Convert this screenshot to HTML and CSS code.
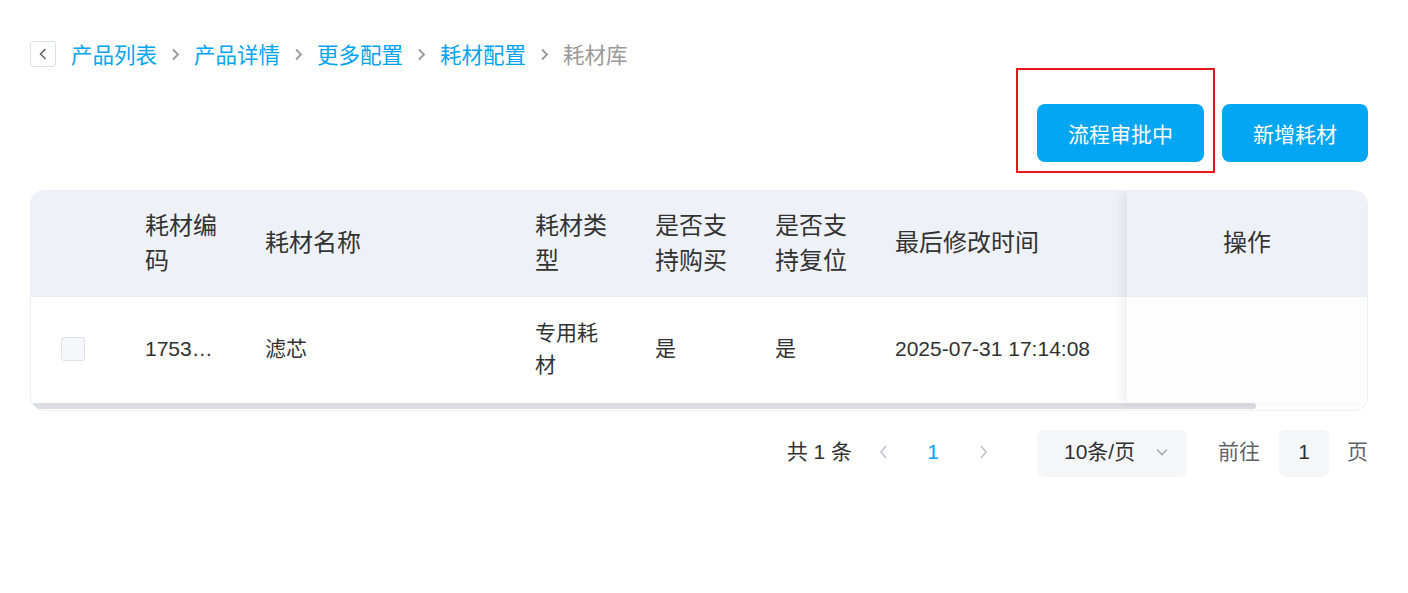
FILE: index.html
```html
<!DOCTYPE html>
<html lang="zh-CN">
<head>
    <meta charset="UTF-8">
    <meta name="viewport" content="width=device-width, initial-scale=1.0">
    <title>耗材库</title>
    <link rel="stylesheet" href="styles.css">
</head>
<body>
    <div class="page">
        <div class="crumbs">
            <span class="back">
                <svg width="8" height="12" viewBox="0 0 8 12"><path d="M6.5 1L1.5 6l5 5" fill="none" stroke="#666" stroke-width="1.6"/></svg>
            </span>
            <a class="crumb">产品列表</a>
            <svg class="sep" width="9" height="13" viewBox="0 0 9 13"><path d="M2 1.5l5 5-5 5" fill="none" stroke="#999" stroke-width="1.8"/></svg>
            <a class="crumb">产品详情</a>
            <svg class="sep" width="9" height="13" viewBox="0 0 9 13"><path d="M2 1.5l5 5-5 5" fill="none" stroke="#999" stroke-width="1.8"/></svg>
            <a class="crumb">更多配置</a>
            <svg class="sep" width="9" height="13" viewBox="0 0 9 13"><path d="M2 1.5l5 5-5 5" fill="none" stroke="#999" stroke-width="1.8"/></svg>
            <a class="crumb">耗材配置</a>
            <svg class="sep" width="9" height="13" viewBox="0 0 9 13"><path d="M2 1.5l5 5-5 5" fill="none" stroke="#999" stroke-width="1.8"/></svg>
            <span class="crumb current">耗材库</span>
        </div>

        <div class="toolbar">
            <div class="marked">
                <button class="btn">流程审批中</button>
                <span class="mark"></span>
            </div>
            <button class="btn">新增耗材</button>
        </div>

        <div class="table">
            <div class="body">
                <div class="main">
                    <div class="row head">
                        <div class="cell c-check"></div>
                        <div class="cell c-code">耗材编码</div>
                        <div class="cell c-name">耗材名称</div>
                        <div class="cell c-type">耗材类型</div>
                        <div class="cell c-buy">是否支持购买</div>
                        <div class="cell c-reset">是否支持复位</div>
                        <div class="cell c-time">最后修改时间</div>
                    </div>
                    <div class="row">
                        <div class="cell c-check"><span class="checkbox"></span></div>
                        <div class="cell c-code nowrap">1753…</div>
                        <div class="cell c-name">滤芯</div>
                        <div class="cell c-type">专用耗材</div>
                        <div class="cell c-buy">是</div>
                        <div class="cell c-reset">是</div>
                        <div class="cell c-time">2025-07-31 17:14:08</div>
                    </div>
                </div>
                <div class="fixed">
                    <div class="row head"><div class="cell c-op">操作</div></div>
                    <div class="row"><div class="cell c-op"></div></div>
                </div>
            </div>
            <div class="scrollbar"><span class="thumb"></span></div>
        </div>

        <div class="pager">
            <span class="total">共 1 条</span>
            <span class="pg-btn">
                <svg width="9" height="16" viewBox="0 0 9 16"><path d="M7 2L2 8l5 6" fill="none" stroke="#c0c4cc" stroke-width="1.7"/></svg>
            </span>
            <span class="pg-btn active">1</span>
            <span class="pg-btn">
                <svg width="9" height="16" viewBox="0 0 9 16"><path d="M2 2l5 6-5 6" fill="none" stroke="#c0c4cc" stroke-width="1.7"/></svg>
            </span>
            <span class="select">
                <span>10条/页</span>
                <svg width="12" height="8" viewBox="0 0 12 8"><path d="M1 1.5l5 5 5-5" fill="none" stroke="#a8abb2" stroke-width="1.6"/></svg>
            </span>
            <span class="goto">前往</span>
            <span class="jump">1</span>
            <span class="goto-end">页</span>
        </div>
    </div>
</body>
</html>
```

FILE: styles.css
```css
* {
    margin: 0;
    padding: 0;
    box-sizing: border-box;
}
body {
    background-color: #fff;
    font-family: "Liberation Sans", Arial, "Noto Sans CJK SC", sans-serif;
    color: #303133;
}
.page {
    padding: 41px 40px 0 30px;
}

/* breadcrumb */
.crumbs {
    display: flex;
    align-items: center;
    height: 26px;
    font-size: 21.5px;
    line-height: 24px;
}
.back {
    width: 26px;
    height: 26px;
    border: 1px solid #dcdfe6;
    border-radius: 3px;
    display: flex;
    justify-content: center;
    align-items: center;
    margin-right: 15px;
}
.crumb {
    color: #03a4ef;
    cursor: pointer;
    padding-top: 4px;
}
.crumb.current {
    color: #999;
    cursor: default;
}
.sep {
    margin: 0 14px;
}

/* toolbar */
.toolbar {
    display: flex;
    justify-content: flex-end;
    gap: 18px;
    margin-top: 37px;
}
.marked {
    position: relative;
}
.mark {
    position: absolute;
    left: -21px;
    top: -36px;
    right: -11px;
    bottom: -11px;
    border: 2px solid #e8161b;
    pointer-events: none;
}
.btn {
    height: 58px;
    padding: 0 31px;
    background-color: #03a6f2;
    color: #fff;
    border: none;
    border-radius: 8px;
    font-family: inherit;
    font-size: 21px;
    cursor: pointer;
    display: block;
}

/* table */
.table {
    margin-top: 28px;
    border: 1px solid #ebeef5;
    border-radius: 14px;
    overflow: hidden;
}
.body {
    display: flex;
}
.main {
    flex: 1;
}
.row {
    display: flex;
    height: 106px;
    font-size: 21px;
    line-height: 32px;
    padding-bottom: 3px;
}
.row.head {
    background-color: #eef1f8;
    font-size: 24px;
    line-height: 35px;
    color: #333;
    border-bottom: 1px solid #ebeef5;
    padding-bottom: 2px;
}
.cell {
    display: flex;
    align-items: center;
    padding: 0 27px 0 15px;
    flex-shrink: 0;
}
.nowrap { white-space: nowrap; }
.c-check { width: 99px; padding-left: 30px; }
.c-code { width: 120px; }
.c-name { width: 270px; }
.c-type { width: 120px; }
.c-buy { width: 120px; }
.c-reset { width: 120px; }
.c-time { flex: 1; padding-right: 0; white-space: nowrap; }
.c-op {
    width: 100%;
    justify-content: center;
    padding: 0;
}
.checkbox {
    width: 24px;
    height: 24px;
    border: 1px solid #dcdfe6;
    border-radius: 3px;
    background-color: #f5f7fa;
}
.fixed {
    width: 240px;
    flex-shrink: 0;
    background-color: #fdfdfd;
    box-shadow: -6px 0 10px rgba(0, 0, 0, 0.06);
    position: relative;
}
.scrollbar {
    height: 7px;
    padding: 0 1px;
}
.thumb {
    display: block;
    width: 1224px;
    height: 6px;
    background-color: #dcdde1;
    border-radius: 3px;
}

/* pagination */
.pager {
    display: flex;
    justify-content: flex-end;
    align-items: center;
    margin-top: 19px;
    font-size: 21px;
    line-height: 24px;
    color: #303133;
}
.total {
    margin-right: 6px;
    padding-bottom: 4px;
}
.pg-btn {
    width: 50px;
    height: 47px;
    display: flex;
    justify-content: center;
    align-items: center;
    padding-bottom: 4px;
}
.pg-btn.active {
    color: #03a4ef;
}
.select {
    width: 150px;
    height: 47px;
    margin-left: 29px;
    padding: 0 19px 3px 27px;
    background-color: #f5f6f8;
    border-radius: 8px;
    display: flex;
    justify-content: space-between;
    align-items: center;
}
.goto {
    margin-left: 31px;
    color: #606266;
    padding-bottom: 4px;
}
.jump {
    width: 50px;
    height: 47px;
    margin-left: 19px;
    padding-bottom: 3px;
    background-color: #f5f6f8;
    border-radius: 6px;
    display: flex;
    justify-content: center;
    align-items: center;
}
.goto-end {
    margin-left: 18px;
    color: #606266;
    padding-bottom: 4px;
}
```
